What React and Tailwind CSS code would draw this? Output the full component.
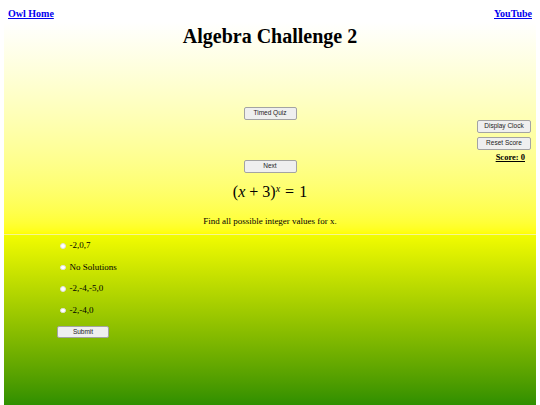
import React from "react";

const btn =
  "flex items-center justify-center bg-[#efefef] border border-[#a3a3a3] rounded-[2px] text-[6.5px] text-[#222] leading-none";

function Option({ label }) {
  return (
    <div className="h-[21.5px] flex items-center pl-[56px]">
      <span className="w-[5.5px] h-[5.5px] rounded-full bg-white border-[0.5px] border-[#e0e0e0]" />
      <span className="ml-[4px] text-[9px] leading-[11px] text-black">{label}</span>
    </div>
  );
}

export default function App() {
  return (
    <div
      className="w-[540px] h-[405px] overflow-hidden bg-white flex flex-col"
      style={{ fontFamily: '"Liberation Serif", "Times New Roman", serif' }}
    >
      <div className="flex justify-between px-[8px] pt-[8px] h-[22px] text-[10px] leading-[12px] font-bold">
        <a href="#" className="underline text-[#0000ee]">Owl Home</a>
        <a href="#" className="underline text-[#0000ee]">YouTube</a>
      </div>
      <div className="mx-[4px] flex-1 flex flex-col">
        <div className="h-[212px] bg-linear-to-b from-white to-[#ffff00] flex flex-col">
          <h1 className="mt-[2px] text-[20px] leading-[24px] font-bold text-center text-black">
            Algebra Challenge 2
          </h1>
          <div className="grid grid-cols-[1fr_auto_1fr] mt-[59px]">
            <div />
            <div className="flex flex-col items-center">
              <button className={`${btn} w-[53px] h-[13px]`} style={{ fontFamily: '"Liberation Sans", Arial, sans-serif' }}>Timed Quiz</button>
              <button className={`${btn} w-[53px] h-[13px] mt-[40px]`} style={{ fontFamily: '"Liberation Sans", Arial, sans-serif' }}>Next</button>
            </div>
            <div className="flex flex-col items-end pr-[5px] pt-[13px]">
              <button className={`${btn} w-[54px] h-[13px]`} style={{ fontFamily: '"Liberation Sans", Arial, sans-serif' }}>Display Clock</button>
              <button className={`${btn} w-[54px] h-[13px] mt-[4px]`} style={{ fontFamily: '"Liberation Sans", Arial, sans-serif' }}>Reset Score</button>
              <div className="mt-[2px] mr-[6px] text-[8.5px] leading-[11px] font-bold underline text-black">Score: 0</div>
            </div>
          </div>
          <div className="mt-[9px] text-center text-[16px] leading-[20px] text-black">
            (<i>x</i>
            <span className="mx-[4px]">+</span>3)<sup className="text-[10px] italic">x</sup>
            <span className="mx-[5px]">=</span>1
          </div>
          <div className="mt-[13px] text-center text-[9px] leading-[12px] text-black">
            Find all possible integer values for x.
          </div>
        </div>
        <div className="h-[1px] bg-[#f6f690]" />
        <div className="flex-1 bg-linear-to-b from-[#f2fc00] to-[#2e8f00] flex flex-col">
          <Option label="-2,0,7" />
          <Option label="No Solutions" />
          <Option label="-2,-4,-5,0" />
          <Option label="-2,-4,0" />
          <button
            className={`${btn} w-[52px] h-[12px] mt-[5px] ml-[53px]`}
            style={{ fontFamily: '"Liberation Sans", Arial, sans-serif' }}
          >
            Submit
          </button>
        </div>
      </div>
    </div>
  );
}
